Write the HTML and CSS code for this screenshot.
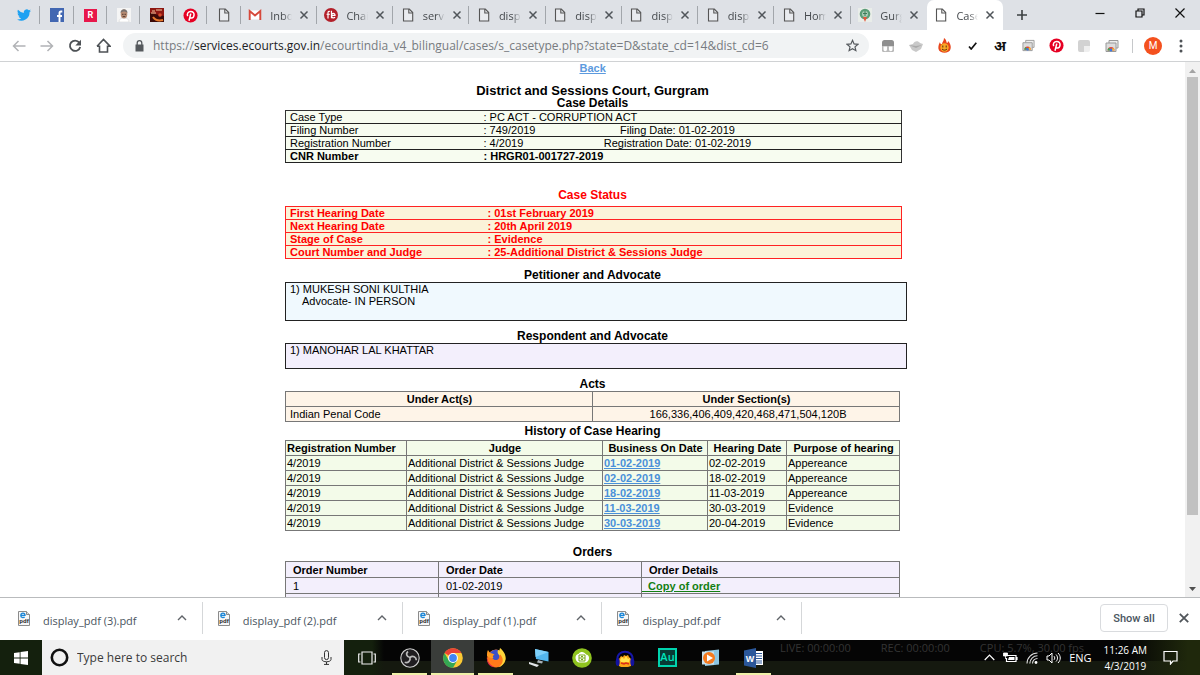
FILE: index.html
```html
<!DOCTYPE html>
<html lang="en">
<head>
    <meta charset="UTF-8">
    <meta name="viewport" content="width=device-width, initial-scale=1.0">
    <title>Case Details</title>
    <link rel="stylesheet" href="styles.css">
</head>
<body>
    <!-- shared icons -->
    <svg class="sprite" width="0" height="0">
        <symbol id="i-page" viewBox="0 0 14 14"><path d="M2.500 1h5.800l3.400 3.500V13H2.500z" fill="#fff" fill-opacity=".35" stroke="#555" stroke-width="1.100"/><path d="M7.800 1v4h3.900" fill="none" stroke="#555" stroke-width="1.100"/></symbol>
        <symbol id="i-x" viewBox="0 0 10 10"><path d="M1.500 1.500l7 7M8.500 1.500l-7 7" stroke="#50555a" stroke-width="1.500"/></symbol>
        <symbol id="i-up" viewBox="0 0 10 6"><path d="M1 5l4-4 4 4" fill="none" stroke="#5f6368" stroke-width="1.400"/></symbol>
        <symbol id="i-pin" viewBox="0 0 16 16"><circle cx="8" cy="8" r="7.500" fill="#e60023"/><path d="M5 8.700C3.800 5.900 5.600 3.700 8.200 3.700c2.500 0 3.800 1.700 3.600 3.800-.2 2-1.500 3.300-2.900 3.200-.8 0-1.300-.6-1.300-.6M8.300 6l-1.900 7.600" fill="none" stroke="#fff" stroke-width="1.600"/></symbol>
        <symbol id="i-pdf" viewBox="0 0 12 15"><path d="M.5.5h8l3 3v11H.5z" fill="#f7f7f7" stroke="#8b8b8b"/><path d="M8.500.5v3h3" fill="#ddd" stroke="#8b8b8b"/><path d="M2.800 4.300h4.200c0-3-4-2.900-4.200-.1-.1 2.600 2.400 2.800 3.900 1.800" fill="none" stroke="#1a86d8" stroke-width="1.300"/><text x="6" y="12" text-anchor="middle" font-size="6" font-weight="bold" font-family="Liberation Sans, sans-serif" fill="#222">pdf</text></symbol>
        <symbol id="i-cast" viewBox="0 0 14 14"><path d="M4 4V1.500h9V9h-2" fill="#eee" stroke="#999"/><path d="M1 4h10v8.500H1z" fill="#ddd" stroke="#999"/><path d="M2.500 11.500a3.500 3.500 0 0 1 7 0z" fill="#e04a3a"/><path d="M2.500 11.500A3.500 3.500 0 0 1 4 8.700l2 2.800z" fill="#3aa757"/><path d="M9.500 11.500A3.500 3.500 0 0 0 8 8.700l-2 2.800z" fill="#fbc02d"/><circle cx="6" cy="11" r="1.400" fill="#3b78e7"/></symbol>
    </svg>

    <header class="tab-strip">
        <div class="tabs">
            <div class="tab pinned"><svg width="14" height="14" viewBox="0 0 24 24"><path fill="#1da1f2" d="M24 4.600a10 10 0 0 1-2.800.8 5 5 0 0 0 2.100-2.700 10 10 0 0 1-3.100 1.200 4.900 4.900 0 0 0-8.400 4.500A14 14 0 0 1 1.700 3.200a4.900 4.900 0 0 0 1.500 6.500 5 5 0 0 1-2.200-.6 4.900 4.900 0 0 0 3.900 4.900 5 5 0 0 1-2.200.1 4.900 4.900 0 0 0 4.600 3.400A9.900 9.900 0 0 1 0 19.500 14 14 0 0 0 21.500 7.100 10 10 0 0 0 24 4.600z"/></svg></div>
            <div class="tab pinned"><svg width="14" height="14" viewBox="0 0 14 14"><path fill="#4267b2" d="M0 0h14v14H0z"/><path d="M12.300 3.500H11c-1 0-1.500.5-1.500 1.600V14M7 8h5" fill="none" stroke="#fff" stroke-width="1.900"/></svg></div>
            <div class="tab pinned"><span class="fav-r">R</span></div>
            <div class="tab pinned"><svg width="14" height="14" viewBox="0 0 14 14"><path fill="#f5f5f5" d="M0 0h14v14H0z"/><path d="M2 14c0-3 2-4 5-4s5 1 5 4z" fill="#fff" stroke="#ccc" stroke-width=".5"/><ellipse cx="7" cy="6" rx="3.300" ry="4.500" fill="#b58a72"/><path d="M3.500 5c0-5 7-5 7 0-2-2-5-2-7 0z" fill="#77716f"/><path d="M5 6.300h1.500M7.500 6.300H9M5.700 8.600h2.600" stroke="#553b30"/></svg></div>
            <div class="tab pinned"><svg width="14" height="14" viewBox="0 0 14 14"><path fill="#8e1712" d="M0 0h14v14H0z"/><path fill="#3b0a08" d="M0 5l14 3v6H0z"/><path d="M2 3h3M6 2h6M1 5h5" stroke="#f2c9a0"/><path d="M3 9c2 3 6 4 10 3" stroke="#e8792c" stroke-width="2" fill="none"/><circle cx="10" cy="7" r="1.800" fill="#d84a2a"/></svg></div>
            <div class="tab pinned"><svg width="15" height="15"><use href="#i-pin"/></svg></div>
            <div class="tab pinned"><svg width="14" height="14"><use href="#i-page"/></svg></div>
            <div class="tab"><svg width="14" height="14" viewBox="0 0 14 14"><path fill="#fff" d="M1 2.500h12v9H1z"/><path d="M1.700 12V3L7 7.500 12.300 3v9" fill="none" stroke="#d6493b" stroke-width="1.900"/></svg><span class="title">Inbox</span><svg class="close"><use href="#i-x"/></svg></div>
            <div class="tab"><svg width="14" height="14" viewBox="0 0 15 15"><circle cx="7.500" cy="7.500" r="7.500" fill="#b3202a"/><path d="M6.500 3.800c-1.500-.8-2.200 0-2.200 1.500v6M2.700 6.700h3.600M8 3v8M8 8c0-3 4-3 3.800 0H8.200c0 3 2.300 3 3.700 2" fill="none" stroke="#fff" stroke-width="1.300"/></svg><span class="title">Chai</span><svg class="close"><use href="#i-x"/></svg></div>
            <div class="tab"><svg width="14" height="14"><use href="#i-page"/></svg><span class="title">servi</span><svg class="close"><use href="#i-x"/></svg></div>
            <div class="tab"><svg width="14" height="14"><use href="#i-page"/></svg><span class="title">displ</span><svg class="close"><use href="#i-x"/></svg></div>
            <div class="tab"><svg width="14" height="14"><use href="#i-page"/></svg><span class="title">displ</span><svg class="close"><use href="#i-x"/></svg></div>
            <div class="tab"><svg width="14" height="14"><use href="#i-page"/></svg><span class="title">displ</span><svg class="close"><use href="#i-x"/></svg></div>
            <div class="tab"><svg width="14" height="14"><use href="#i-page"/></svg><span class="title">displ</span><svg class="close"><use href="#i-x"/></svg></div>
            <div class="tab"><svg width="14" height="14"><use href="#i-page"/></svg><span class="title">Hom</span><svg class="close"><use href="#i-x"/></svg></div>
            <div class="tab no-line"><svg width="14" height="14" viewBox="0 0 14 14"><path fill="#e9ede9" d="M0 0h14v14H0z"/><circle cx="7" cy="6" r="5.300" fill="#5a9c77"/><circle cx="7" cy="6" r="3" fill="#a9cdb6"/><path d="M7 3v5M5 5.500h4" stroke="#3c7a58"/><path d="M5 9h4l-2 5z" fill="#e4573d"/></svg><span class="title">Gurg</span><svg class="close"><use href="#i-x"/></svg></div>
            <div class="tab active"><svg width="14" height="14"><use href="#i-page"/></svg><span class="title">Case</span><svg class="close"><use href="#i-x"/></svg></div>
        </div>
        <button class="new-tab" aria-label="New tab"><svg width="12" height="12" viewBox="0 0 12 12"><path d="M6 1v10M1 6h10" stroke="#3c4043" stroke-width="1.600"/></svg></button>
        <div class="window-buttons">
            <button aria-label="Minimize"><svg width="10" height="10" viewBox="0 0 10 10"><path d="M.5 5.500h9" stroke="#111" stroke-width="1.200"/></svg></button>
            <button aria-label="Restore"><svg width="10" height="10" viewBox="0 0 10 10"><path d="M1 3h6v6H1zM3 3V1h6v6H7" fill="none" stroke="#111" stroke-width="1.200"/></svg></button>
            <button aria-label="Close"><svg width="10" height="10" viewBox="0 0 10 10"><path d="M.5.5l9 9M9.500.5l-9 9" stroke="#111" stroke-width="1.200"/></svg></button>
        </div>
    </header>

    <nav class="toolbar">
        <button class="tool" aria-label="Back"><svg width="14" height="12" viewBox="0 0 14 12"><path d="M13.500 6H1.500M6.500 1l-5 5 5 5" fill="none" stroke="#b1b3b6" stroke-width="1.500"/></svg></button>
        <button class="tool" aria-label="Forward"><svg width="14" height="12" viewBox="0 0 14 12"><path d="M.5 6h12M7.500 1l5 5-5 5" fill="none" stroke="#b1b3b6" stroke-width="1.500"/></svg></button>
        <button class="tool" aria-label="Reload"><svg width="14" height="14" viewBox="0 0 14 14"><path d="M11.300 3.600A5.200 5.200 0 1 0 12.200 8" fill="none" stroke="#4e5256" stroke-width="1.800"/><path d="M13 .8v5.700H7.300z" fill="#4e5256"/></svg></button>
        <button class="tool" aria-label="Home"><svg width="15" height="15" viewBox="0 0 15 15"><path d="M3.500 7.500V14h8V7.500M1 8.200L7.500 1.500 14 8.200h-2.500M1 8.200h2.500" fill="none" stroke="#4e5256" stroke-width="1.600"/></svg></button>
        <div class="omnibox">
            <svg width="9" height="12" viewBox="0 0 9 12"><path fill="#55595d" d="M.5 4.500h8v7h-8z"/><path d="M2.200 5V3a2.300 2.300 0 0 1 4.600 0v2" fill="none" stroke="#55595d" stroke-width="1.300"/></svg>
            <span class="url">https://<b>services.ecourts.gov.in</b>/ecourtindia_v4_bilingual/cases/s_casetype.php?state=D&amp;state_cd=14&amp;dist_cd=6</span>
            <svg width="13" height="13" viewBox="0 0 24 24"><path d="M12 2.500l2.900 6.600 7.100.7-5.400 4.700 1.600 7L12 17.800l-6.200 3.700 1.600-7L2 9.800l7.100-.7z" fill="none" stroke="#55595d" stroke-width="2.200"/></svg>
        </div>
        <div class="extensions">
            <button class="tool" aria-label="Reader"><svg width="12" height="12" viewBox="0 0 12 12"><rect width="12" height="12" rx="2.500" fill="#8f8f8f"/><path d="M0 6h12v4a2 2 0 0 1-2 2H2a2 2 0 0 1-2-2z" fill="#bbb"/><path d="M1.500 6.500h3.500v3a1.700 1.700 0 0 1-3.500 0zM7 6.500h3.500v3a1.700 1.700 0 0 1-3.500 0z" fill="#fff"/></svg></button>
            <button class="tool" aria-label="Cloud"><svg width="14" height="12" viewBox="0 0 14 12"><path d="M0 5l4-1c1-3 5-4 7-1l3 1-2 5-5 3-4-2z" fill="#c9c9c9"/><path d="M0 5l7 1 6-1-6 3z" fill="#aaa"/></svg></button>
            <button class="tool" aria-label="Flame"><svg width="13" height="15" viewBox="0 0 13 15"><path d="M6 0c3 2 2 4 3 5 1 0 1-2 1-2 3 3 3 6 2.500 8-1 5-11 5-12 0C0 8 1 6 2 4c0 2 1 2 2 2 0-2 2-3 2-6z" fill="#e8451c"/><circle cx="6.500" cy="9.500" r="4.200" fill="#f9a825"/><path d="M4.800 7.500v2M8.200 7.500v2M4 11c1.500 1.500 3.500 1.500 5 0" stroke="#5a2b10" fill="none"/></svg></button>
            <button class="tool" aria-label="Check"><svg width="9" height="8" viewBox="0 0 9 8"><path d="M1 4.500L3.200 7 8.300.8" fill="none" stroke="#111" stroke-width="1.700"/></svg></button>
            <button class="tool hindi" aria-label="Hindi input">अ</button>
            <button class="tool" aria-label="Cast"><svg width="13" height="13"><use href="#i-cast"/></svg></button>
            <button class="tool" aria-label="Pinterest"><svg width="15" height="15"><use href="#i-pin"/></svg></button>
            <button class="tool" aria-label="Notes"><svg width="12" height="12" viewBox="0 0 12 12"><path d="M2 0h8a2 2 0 0 1 2 2v4H6v6H2a2 2 0 0 1-2-2V2a2 2 0 0 1 2-2z" fill="#d2d2d2"/><path d="M6 6h6v4a2 2 0 0 1-2 2H6z" fill="#efefef"/></svg></button>
            <button class="tool" aria-label="Cast tab"><svg width="14" height="14"><use href="#i-cast"/></svg></button>
        </div>
        <span class="divider"></span>
        <button class="tool" aria-label="Profile"><span class="avatar">M</span></button>
        <button class="tool" aria-label="Menu"><svg width="4" height="14" viewBox="0 0 4 14"><g fill="#4e5256"><circle cx="2" cy="2" r="1.500"/><circle cx="2" cy="7" r="1.500"/><circle cx="2" cy="12" r="1.500"/></g></svg></button>
    </nav>

    <div class="viewport">
        <main class="page">
            <div class="case">
                <a class="back" href="#">Back</a>
                <h1>District and Sessions Court, Gurgram</h1>
                <h2>Case Details</h2>
                <table class="details">
                    <colgroup><col class="c-label"><col class="c-value"><col class="c-date"><col></colgroup>
                    <tr><td>Case Type</td><td colspan="3">: PC ACT - CORRUPTION ACT</td></tr>
                    <tr><td>Filing Number</td><td>: 749/2019</td><td class="date">Filing Date: 01-02-2019</td><td></td></tr>
                    <tr><td>Registration Number</td><td>: 4/2019</td><td class="date">Registration Date: 01-02-2019</td><td></td></tr>
                    <tr class="strong"><td>CNR Number</td><td colspan="3">: HRGR01-001727-2019</td></tr>
                </table>

                <h2 class="red">Case Status</h2>
                <table class="details status">
                    <colgroup><col class="c-label"><col></colgroup>
                    <tr><td>First Hearing Date</td><td>: 01st February 2019</td></tr>
                    <tr><td>Next Hearing Date</td><td>: 20th April 2019</td></tr>
                    <tr><td>Stage of Case</td><td>: Evidence</td></tr>
                    <tr><td>Court Number and Judge</td><td>: 25-Additional District &amp; Sessions Judge</td></tr>
                </table>

                <h2 class="petitioner-title">Petitioner and Advocate</h2>
                <div class="party petitioner">1) MUKESH SONI KULTHIA<p>Advocate- IN PERSON</p></div>

                <h2 class="respondent-title">Respondent and Advocate</h2>
                <div class="party respondent">1) MANOHAR LAL KHATTAR</div>

                <h2 class="acts-title">Acts</h2>
                <table class="grid acts">
                    <tr><th>Under Act(s)</th><th>Under Section(s)</th></tr>
                    <tr><td>Indian Penal Code</td><td class="center">166,336,406,409,420,468,471,504,120B</td></tr>
                </table>

                <h2 class="history-title">History of Case Hearing</h2>
                <table class="grid history">
                    <colgroup><col class="h-reg"><col class="h-judge"><col class="h-business"><col class="h-hearing"><col></colgroup>
                    <tr><th class="left">Registration Number</th><th>Judge</th><th>Business On Date</th><th>Hearing Date</th><th>Purpose of hearing</th></tr>
                    <tr><td>4/2019</td><td>Additional District &amp; Sessions Judge</td><td><a href="#">01-02-2019</a></td><td>02-02-2019</td><td>Appereance</td></tr>
                    <tr><td>4/2019</td><td>Additional District &amp; Sessions Judge</td><td><a href="#">02-02-2019</a></td><td>18-02-2019</td><td>Appereance</td></tr>
                    <tr><td>4/2019</td><td>Additional District &amp; Sessions Judge</td><td><a href="#">18-02-2019</a></td><td>11-03-2019</td><td>Appereance</td></tr>
                    <tr><td>4/2019</td><td>Additional District &amp; Sessions Judge</td><td><a href="#">11-03-2019</a></td><td>30-03-2019</td><td>Evidence</td></tr>
                    <tr><td>4/2019</td><td>Additional District &amp; Sessions Judge</td><td><a href="#">30-03-2019</a></td><td>20-04-2019</td><td>Evidence</td></tr>
                </table>

                <h2 class="orders-title">Orders</h2>
                <table class="grid orders">
                    <colgroup><col class="o-number"><col class="o-date"><col></colgroup>
                    <tr><th>Order Number</th><th>Order Date</th><th>Order Details</th></tr>
                    <tr><td>1</td><td>01-02-2019</td><td class="copy"><a href="#">&nbsp; Copy of order</a></td></tr>
                    <tr><td></td><td></td><td></td></tr>
                </table>
            </div>
        </main>
        <div class="scrollbar">
            <svg width="7" height="4" viewBox="0 0 7 4"><path d="M0 4l3.500-4L7 4z" fill="#a3a3a3"/></svg>
            <span class="thumb"></span>
            <svg width="7" height="4" viewBox="0 0 7 4"><path d="M0 0h7L3.500 4z" fill="#505050"/></svg>
        </div>
    </div>

    <section class="downloads">
        <div class="files">
            <div class="file"><svg width="12" height="15"><use href="#i-pdf"/></svg><span>display_pdf (3).pdf</span><svg class="up"><use href="#i-up"/></svg></div>
            <div class="file"><svg width="12" height="15"><use href="#i-pdf"/></svg><span>display_pdf (2).pdf</span><svg class="up"><use href="#i-up"/></svg></div>
            <div class="file"><svg width="12" height="15"><use href="#i-pdf"/></svg><span>display_pdf (1).pdf</span><svg class="up"><use href="#i-up"/></svg></div>
            <div class="file"><svg width="12" height="15"><use href="#i-pdf"/></svg><span>display_pdf.pdf</span><svg class="up"><use href="#i-up"/></svg></div>
        </div>
        <button class="show-all">Show all</button>
        <button class="dismiss" aria-label="Close downloads"><svg width="12" height="12"><use href="#i-x"/></svg></button>
    </section>

    <footer class="taskbar">
        <div class="recorder"><span>LIVE: 00:00:00</span><span>REC: 00:00:00</span><span>CPU: 5.7%, 30.00 fps</span></div>
        <button class="start" aria-label="Start"><svg width="14" height="14" viewBox="0 0 14 14"><path fill="#fff" d="M0 2l5.700-.8v5.400H0zM6.500 1.100L14 0v6.600H6.500zM0 7.400h5.700v5.400L0 12zM6.500 7.400H14V14l-7.500-1.100z"/></svg></button>
        <label class="search">
            <svg width="19" height="19" viewBox="0 0 19 19"><circle cx="9.500" cy="9.500" r="7.700" fill="none" stroke="#111" stroke-width="2.600"/></svg>
            <input type="text" placeholder="Type here to search" aria-label="Search">
            <svg width="11" height="15" viewBox="0 0 11 15"><rect x="3.500" y=".6" width="4" height="9" rx="2" fill="none" stroke="#333"/><path d="M1 7v2.500c0 3 9 3 9 0V7M5.500 12v2.500M3 14.400h5" fill="none" stroke="#333"/></svg>
        </label>
        <div class="apps">
            <button aria-label="Task view"><svg width="18" height="14" viewBox="0 0 18 14"><path d="M4 1h10v12H4zM2.500 3H.7v8h1.800M15.500 3h1.800v8h-1.800" fill="none" stroke="#eee" stroke-width="1.200"/></svg></button>
            <button class="open" aria-label="OBS"><svg width="20" height="20" viewBox="0 0 20 20"><circle cx="10" cy="10" r="9.200" fill="#1f1d20" stroke="#ccc" stroke-width="1.100"/><path d="M10 9.500C6.500 9 5.500 5.500 8 3.500M10 9.500c2.800-2.300 6.300-.5 6.300 2.800M10 9.500c.8 3.500-2 5.800-5.300 4.800" fill="none" stroke="#bbb" stroke-width="1.700"/></svg></button>
            <button class="open current" aria-label="Chrome"><svg width="20" height="20" viewBox="0 0 20 20"><circle cx="10" cy="10" r="9.800" fill="#fcc934"/><path d="M10 10L1.500 5.100A9.800 9.800 0 0 1 18.500 5.100H10z" fill="#ea4335"/><path d="M1.500 5.100A9.800 9.800 0 0 0 10 19.800l4.200-7.400L10 10l-4.200 2.400z" fill="#34a853"/><circle cx="10" cy="10" r="4.900" fill="#fff"/><circle cx="10" cy="10" r="3.900" fill="#4285f4"/></svg></button>
            <button class="open" aria-label="Firefox"><svg width="20" height="20" viewBox="0 0 20 20"><circle cx="10" cy="10.500" r="9" fill="#ff7a1a"/><path d="M9 3c4-2 8 1 9 5-2-2-4-2-5 0z" fill="#ffd53a"/><path d="M14 0c4 3 6.500 8 5.500 12-1 4-4 6.500-7 7.300 5-4 5-8 3-11C13.500 5 13 3 14 0z" fill="#ffd53a"/><path d="M4 5c2-3 5-4 8-3-1 2 0 4 1 5 1 3-1 5-3 5-3 0-3-2-5-3z" fill="#3b50c8"/><path d="M2 2l2 3c2 0 4 1 4.500 2-2 0-2 2-1 3C5 11 2 9 1 8c0-3 0-4 1-6z" fill="#ff9a20"/><path d="M1 8c0 6 3 9 8 11.300C4 19.500 0 15 1 8z" fill="#e0234f"/></svg></button>
            <button aria-label="Remote desktop"><svg width="20" height="20" viewBox="0 0 20 20"><path d="M6 1l13.500 3v9.500L7 11z" fill="#53b6ee"/><path d="M6 1l13.500 3L6.500 9z" fill="#7fd0fa"/><path d="M9 12l5 1.500-1 2-5-1z" fill="#aab2b8"/><path d="M0 14l10 3-2 2-8-3z" fill="#e3e6e8"/></svg></button>
            <button aria-label="Cloud android"><svg width="20" height="20" viewBox="0 0 20 20"><circle cx="10" cy="10" r="9.800" fill="#8fc31f"/><path d="M4 12c-1.500-4 1-6 2.500-6 2-3 6-2.500 7.500.5 3 0 4 4 2 6.500-1 1-2 1.500-3 1.500H7c-1 0-2.500-1-3-2.500z" fill="#fff"/><path d="M7 7h6v6H7zM7 10h6M9 8.500h2M9 11.500h2" stroke="#78a817" fill="none"/></svg></button>
            <button aria-label="Audacity"><svg width="20" height="20" viewBox="0 0 20 20"><path d="M2.500 12C1 1 19 1 17.500 12" fill="none" stroke="#1616a8" stroke-width="2"/><path d="M4 11l2-3 2 1 1-2 2 1 2-1 1 2 2 2v7l-3 1H6l-2-1z" fill="#f9a416"/><path d="M5 12l2-3 2 2 2-3 2 3 2-1-1 4H6z" fill="#ffe34d"/><path d="M6 15l3 1 2-1 3 1" stroke="#d82e1b" stroke-width="1.500" fill="none"/><ellipse cx="2.700" cy="14" rx="2" ry="4" fill="#1212a0"/><ellipse cx="17.300" cy="14" rx="2" ry="4" fill="#1212a0"/></svg></button>
            <button aria-label="Audition"><span class="au">Au</span></button>
            <button aria-label="Media player"><svg width="19" height="18" viewBox="0 0 19 18"><path d="M4 2l14-1.500v15L4 17z" fill="#8cc6e2"/><path d="M1 2.500h12v13H1z" fill="#c8e2ee"/><circle cx="8" cy="9" r="6" fill="#f47b20"/><path d="M6 5.500l6 3.500-6 3.500z" fill="#fff"/></svg></button>
            <button class="open" aria-label="Word"><svg width="20" height="20" viewBox="0 0 20 20"><path d="M11 3h8v14h-8z" fill="#fff"/><path d="M12 5.500h6M12 8h6M12 10.500h6M12 13h6M12 15h6" stroke="#2b579a"/><path d="M0 2.500L12 0v20L0 17.500z" fill="#2b579a"/><text x="6" y="13.500" text-anchor="middle" font-family="Liberation Sans, sans-serif" font-size="9" font-weight="bold" fill="#fff">W</text></svg></button>
        </div>
        <div class="tray">
            <svg width="11" height="7" viewBox="0 0 11 7"><path d="M.7 6l4.800-4.800L10.300 6" fill="none" stroke="#fff" stroke-width="1.200"/></svg>
            <svg width="15" height="11" viewBox="0 0 15 11"><path d="M4 3.500h9v6H3.500V6M14 5v3" fill="none" stroke="#fff" stroke-width="1.200"/><path d="M6 5h5.500v3H5z" fill="#fff"/><path d="M.5 1h4v3h-4zM2.500 4v3" fill="#fff" stroke="#fff" stroke-width=".8"/></svg>
            <svg width="12" height="12" viewBox="0 0 12 12"><g fill="none" stroke="#ddd" stroke-width="1.100"><path d="M1 11.500A10.500 10.500 0 0 1 11.500 1"/><path d="M3.800 11.500A7.700 7.700 0 0 1 11.500 3.800"/><path d="M6.500 11.500a5 5 0 0 1 5-5"/></g><circle cx="10" cy="10.500" r="1.400" fill="#fff"/></svg>
            <svg width="15" height="12" viewBox="0 0 15 12"><path d="M1 4h2l3-3v10L3 8H1zM8 4.200c1 1 1 2.600 0 3.600M10 2.500c2 2 2 5 0 7M12 1c3 3 3 7 0 10" fill="none" stroke="#fff"/></svg>
            <span>ENG</span>
            <span class="clock">11:26 AM<br>4/3/2019</span>
            <svg width="15" height="15" viewBox="0 0 15 15"><path d="M1 1.500h13v9.500h-4L7.500 14V11H1z" fill="none" stroke="#fff" stroke-width="1.200"/></svg>
        </div>
    </footer>
</body>
</html>
```

FILE: styles.css
```css
* {
    box-sizing: border-box;
}
body {
    margin: 0;
    height: 100vh;
    display: flex;
    flex-direction: column;
    overflow: hidden;
    background: #fff;
    font-family: "Liberation Sans", Arial, sans-serif;
    font-size: 11px;
    color: #000;
}
button {
    border: none;
    background: none;
    padding: 0;
    display: flex;
    align-items: center;
    justify-content: center;
    font-family: inherit;
}
svg {
    flex: none;
    display: block;
}
.sprite {
    position: absolute;
}

/* tabs */
.tab-strip {
    flex: none;
    display: flex;
    height: 30px;
    background: #dee1e6;
    font-family: "Open Sans", "Noto Sans", sans-serif;
}
.tabs {
    display: flex;
    width: 83%;
    margin-left: 7px;
}
.tab {
    flex: 16 1 0;
    min-width: 0;
    display: flex;
    align-items: center;
    justify-content: center;
    background: linear-gradient(#a2a6ab, #a2a6ab) right center / 1px 18px no-repeat;
}
.tab.pinned {
    flex-grow: 7;
}
.tab.no-line {
    background: none;
}
.tab.active {
    background: #fff;
    border-radius: 7px 7px 0 0;
}
.title {
    width: 22px;
    margin: 0 7px 0 8px;
    overflow: hidden;
    white-space: nowrap;
    font-size: 11px;
    color: #45494d;
    -webkit-mask-image: linear-gradient(to right, #000 60%, transparent);
    mask-image: linear-gradient(to right, #000 60%, transparent);
}
.close {
    width: 10px;
    height: 10px;
}
.new-tab {
    width: 38px;
}
.window-buttons {
    display: flex;
    margin-left: auto;
    height: 26px;
}
.window-buttons button {
    width: 40px;
}

/* toolbar */
.toolbar {
    flex: none;
    display: flex;
    align-items: center;
    height: 32px;
    padding: 0 5px;
    border-bottom: 1px solid #d0d2d4;
}
.tool {
    width: 28px;
    height: 28px;
}
.omnibox {
    flex: 1;
    min-width: 0;
    display: flex;
    align-items: center;
    height: 25px;
    margin: 0 5px 0 6px;
    padding: 0 10px 0 12px;
    border-radius: 13px;
    background: #f1f3f4;
}
.url {
    flex: 1;
    margin-left: 9px;
    overflow: hidden;
    white-space: nowrap;
    font-family: "Open Sans", "Noto Sans", sans-serif;
    font-size: 12px;
    color: #777b80;
}
.url b {
    font-weight: normal;
    color: #202124;
}
.extensions {
    display: flex;
}
.hindi {
    font-family: "Noto Sans", sans-serif;
    font-size: 14px;
    font-weight: bold;
    color: #111;
}
.divider {
    width: 1px;
    height: 14px;
    margin: 0 6px;
    background: #c6c8ca;
}
.avatar {
    width: 18px;
    height: 18px;
    border-radius: 50%;
    background: #f4511e;
    color: #fff;
    font-family: Roboto, sans-serif;
    font-size: 10px;
    line-height: 18px;
}
.fav-r {
    width: 13px;
    height: 13px;
    background: #e8174b;
    color: #fff;
    font: bold 9px/13px Roboto, sans-serif;
    text-align: center;
}

/* court page */
.viewport {
    flex: 1;
    min-height: 0;
    display: flex;
}
.page {
    flex: 1;
    overflow: hidden;
}
.case {
    width: 615px;
    margin: 0 auto;
}
.back {
    display: block;
    width: 26px;
    margin: 0 auto;
    line-height: 13px;
    font-weight: bold;
    color: #5c9ade;
}
h1, h2 {
    margin: 0;
    font-size: 12px;
    line-height: 13px;
    text-align: center;
}
h1 {
    margin-top: 9px;
    font-size: 13px;
}
.red {
    margin-top: 26px;
    color: #f00;
}
table {
    width: 100%;
    border-collapse: collapse;
    table-layout: fixed;
    border: 1px solid #333;
}
td, th {
    padding: 0 0 0 1px;
    white-space: nowrap;
}
.details {
    width: 617px;
    background: #f7fcf0;
}
.details td {
    height: 13px;
    padding-left: 4px;
    line-height: 12px;
}
.details tr {
    border-bottom: 1px solid #222;
}
.details .date {
    padding: 0;
    text-align: center;
}
.c-label {
    width: 194px;
}
.c-value {
    width: 120px;
}
.c-date {
    width: 156px;
}
.strong {
    font-weight: bold;
}
.status {
    margin-top: 4px;
    border-color: #f22;
    background: #fbf3d9;
    color: #f00;
    font-weight: bold;
}
.status tr {
    border-color: #f22;
}
.status .c-label {
    width: 198px;
}
.petitioner-title {
    margin-top: 10px;
}
.respondent-title, .acts-title {
    margin-top: 9px;
}
.party {
    width: 622px;
    padding-left: 4px;
    border: 1px solid #222;
    line-height: 12px;
}
.party p {
    margin: 0 0 0 12px;
}
.petitioner {
    height: 39px;
    background: #f0f9fe;
}
.respondent {
    height: 26px;
    background: #f3effc;
}
.grid td, .grid th {
    height: 15px;
    line-height: 14px;
    border: 1px solid #777;
}
.grid .left {
    text-align: left;
}
.grid .center {
    text-align: center;
}
.acts {
    background: #fef4e8;
}
.acts td {
    padding-left: 4px;
}
.history-title {
    margin: 3px 0 2px;
}
.history {
    background: #f3fbe9;
}
.history a {
    color: #4a90d9;
    font-weight: bold;
}
.h-reg {
    width: 121px;
}
.h-judge {
    width: 196px;
}
.h-business {
    width: 105px;
}
.h-hearing {
    width: 79px;
}
.orders-title {
    margin: 15px 0 2px;
}
.orders {
    background: #f3effc;
}
.orders td, .orders th {
    height: 16px;
    padding-left: 7px;
    text-align: left;
}
.o-number {
    width: 153px;
}
.o-date {
    width: 203px;
}
.orders .copy {
    padding-left: 0;
}
.copy a {
    color: #138013;
    font-weight: bold;
}
.scrollbar {
    width: 15px;
    display: flex;
    flex-direction: column;
    align-items: center;
    padding: 7px 0 6px;
    background: #f1f1f1;
}
.thumb {
    width: 11px;
    height: 84%;
    margin: 4px 0 auto;
    background: #c1c1c1;
}

/* downloads */
.downloads {
    flex: none;
    display: flex;
    align-items: center;
    height: 43px;
    padding: 0 4px 2px 3px;
    border-top: 1px solid #b9bbbd;
    font-family: "Open Sans", "Noto Sans", sans-serif;
}
.files {
    display: flex;
    width: 67%;
}
.file {
    flex: 1;
    display: flex;
    align-items: center;
    height: 32px;
    padding: 0 15px;
    border-right: 1px solid #d5d7d9;
}
.file span {
    flex: 1;
    margin: 5px 0 0 13px;
    color: #4a5560;
}
.up {
    width: 10px;
    height: 6px;
}
.show-all {
    width: 68px;
    height: 28px;
    margin-left: auto;
    border: 1px solid #d9dbde;
    border-radius: 4px;
    font: 500 11px Roboto, sans-serif;
    color: #4a5560;
}
.dismiss {
    width: 24px;
    height: 24px;
    margin-left: 4px;
}

/* taskbar */
.taskbar {
    flex: none;
    position: relative;
    display: flex;
    height: 35px;
    background: linear-gradient(to right, #14200d 0, #14200d 31%, transparent 32%, transparent 94%, #1f280c 99%), linear-gradient(#050505 60%, #15190f 60%);
    font-family: "Open Sans", "Noto Sans", sans-serif;
}
.recorder {
    position: absolute;
    left: 65%;
    top: 0;
    display: flex;
    gap: 30px;
    line-height: 15px;
    color: #343434;
}
.start {
    width: 42px;
}
.search {
    width: 302px;
    display: flex;
    align-items: center;
    padding: 0 12px 0 8px;
    background: #f1f1f1;
}
.search input {
    flex: 1;
    min-width: 0;
    margin-left: 8px;
    padding: 0;
    border: none;
    background: none;
    font: 12px "Open Sans", "Noto Sans", sans-serif;
}
.search input::placeholder {
    color: #3a3a3a;
}
.apps {
    display: flex;
    padding-left: 1px;
}
.apps button {
    width: 43px;
}
.apps .open {
    background: linear-gradient(#eef0a8, #eef0a8) center bottom / 35px 2px no-repeat;
}
.apps .current {
    background-color: #3a3d3a;
    background-size: 100% 2px;
}
.au {
    width: 19px;
    height: 19px;
    border: 2px solid #00d4ae;
    background: #073a35;
    color: #00e4bb;
    font-size: 11px;
    font-weight: 600;
    line-height: 14px;
}
.tray {
    position: relative;
    display: flex;
    align-items: center;
    gap: 8px;
    margin-left: auto;
    padding-right: 22px;
    color: #fff;
}
.clock {
    margin: 0 8px 0 4px;
    line-height: 16px;
    font-size: 10px;
    text-align: center;
}
```
